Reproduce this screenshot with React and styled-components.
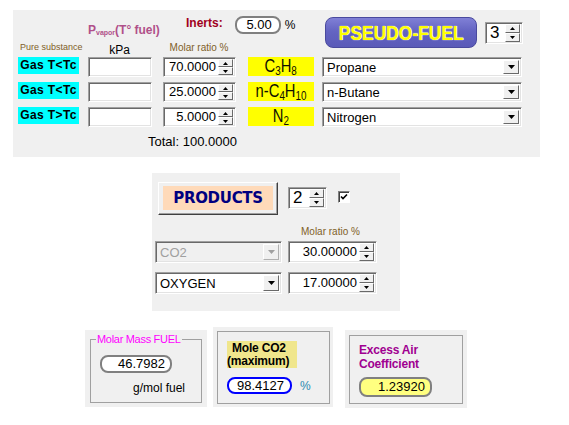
import React from 'react';
import styled, { createGlobalStyle } from 'styled-components';

const GlobalStyle = createGlobalStyle`
  * { box-sizing: border-box; }
  body {
    margin: 0;
    background: #fff;
    font-family: "Liberation Sans", Arial, sans-serif;
    color: #000;
  }
`;

const COLS = '70px 75px 85px 74px 218px';

const Page = styled.div`
  width: 569px;
  height: 425px;
  display: flex;
  flex-direction: column;
  align-items: flex-start;
  overflow: hidden;
`;

/* ---------- win controls ---------- */

const Sunken = styled.div`
  display: flex;
  align-items: center;
  width: ${p => p.$w}px;
  height: ${p => p.$h || 20}px;
  background: ${p => (p.$disabled ? '#f0f0f0' : '#fff')};
  border: 1px solid;
  border-color: #a0a0a0 #fff #fff #a0a0a0;
  box-shadow: inset 1px 1px #696969, inset -1px -1px #e3e3e3;
  padding: 2px;
`;

const Raised = styled.div`
  display: flex;
  align-items: center;
  justify-content: center;
  background: #f0f0f0;
  border: 1px solid;
  border-color: #fff #696969 #696969 #fff;
`;

const SpinValue = styled.div`
  flex: 1;
  font-size: ${p => p.$fs || 13}px;
  line-height: 16px;
  text-align: ${p => p.$align || 'right'};
  padding: 0 2px;
  white-space: nowrap;
`;

const SpinButtons = styled.div`
  display: flex;
  flex-direction: column;
  width: 15px;
  height: ${p => p.$h}px;
`;

const SpinBtn = styled(Raised)`
  flex: 1;
`;

const Tri = ({ down, w = 5, h = 3, color = '#000' }) => (
  <svg width={w} height={h} viewBox={`0 0 ${w} ${h}`}>
    <path d={down ? `M0 0H${w}L${w / 2} ${h}z` : `M${w / 2} 0L${w} ${h}H0z`} fill={color} />
  </svg>
);

const Spin = ({ w, h = 20, value, fs, align }) => (
  <Sunken $w={w} $h={h}>
    <SpinValue $fs={fs} $align={align}>{value}</SpinValue>
    <SpinButtons $h={h - 4}>
      <SpinBtn><Tri /></SpinBtn>
      <SpinBtn><Tri down /></SpinBtn>
    </SpinButtons>
  </Sunken>
);

const SelectText = styled.div`
  flex: 1;
  font-size: 13px;
  padding-left: 2px;
  color: ${p => (p.$disabled ? '#a0a0a0' : '#000')};
`;

const ArrowBtn = styled(Raised)`
  width: 16px;
  height: 100%;
  border-color: ${p => (p.$disabled ? '#fff #b0b0b0 #b0b0b0 #fff' : '#fff #696969 #696969 #fff')};
`;

const Select = ({ w, h = 20, value, disabled }) => (
  <Sunken $w={w} $h={h} $disabled={disabled}>
    <SelectText $disabled={disabled}>{value}</SelectText>
    <ArrowBtn $disabled={disabled}>
      <Tri down w={7} h={4} color={disabled ? '#a0a0a0' : '#000'} />
    </ArrowBtn>
  </Sunken>
);

const Pill = styled.div`
  width: ${p => p.$w}px;
  height: ${p => p.$h}px;
  border: 2px solid ${p => p.$border || '#808080'};
  border-radius: 8px;
  background: ${p => p.$bg || '#fff'};
  font-size: 13px;
  line-height: ${p => p.$h - 4}px;
  text-align: right;
  padding-right: ${p => p.$pr || 6}px;
`;

/* ---------- top panel ---------- */

const TopPanel = styled.section`
  margin: 10px 0 0 13px;
  width: 527px;
  height: 147px;
  background: #f0f0f0;
  padding-left: 5px;
  display: flex;
  flex-direction: column;
`;

const Header = styled.div`
  display: grid;
  grid-template-columns: ${COLS};
  grid-template-rows: 32px 15px;
`;

const Pvapor = styled.div`
  grid-column: 2;
  grid-row: 1;
  margin-top: 12px;
  font-size: 12px;
  font-weight: bold;
  line-height: 16px;
  color: #b0508a;
  white-space: nowrap;
  sub { font-size: 7px; vertical-align: -1px; }
`;

const InertsGroup = styled.div`
  grid-column: 3 / 5;
  grid-row: 1;
  margin: 6px 0 0 23px;
  display: flex;
  align-items: center;
  align-self: start;
`;

const InertsLabel = styled.span`
  font-size: 12px;
  font-weight: bold;
  color: #a00020;
  margin-right: 12px;
  margin-top: -4px;
`;

const Percent = styled.span`
  font-size: 12px;
  margin-left: ${p => p.$ml || 4}px;
  color: ${p => p.$color || '#000'};
`;

const RightGroup = styled.div`
  grid-column: 5;
  grid-row: 1 / 3;
  margin: 7px 0 0 3px;
  display: flex;
  align-items: flex-start;
`;

const PseudoButton = styled.button`
  width: 152px;
  height: 31px;
  border: 1px solid #4a4a9e;
  border-radius: 8px;
  background: linear-gradient(#8080d6, #6464c2 45%, #5a5ab8);
  display: flex;
  align-items: center;
  justify-content: center;
  padding: 0;
  cursor: pointer;
`;

const Narrow = styled.span`
  display: inline-block;
  transform: scaleX(${p => p.$sx || 0.85});
  white-space: nowrap;
`;

const PseudoText = styled(Narrow)`
  font-family: "Liberation Sans", Arial, sans-serif;
  font-size: 21px;
  font-weight: bold;
  color: #ffff00;
  text-shadow: 0 0 1px #fffff0, 0 0 1px #fffff0;
`;

const SpinSlot = styled.div`
  margin: ${p => p.$mt || 0}px 0 0 ${p => p.$ml || 0}px;
`;

const SmallLabel = styled.div`
  font-size: ${p => p.$fs || 10}px;
  line-height: 11px;
  color: #806028;
  white-space: nowrap;
`;

const PureLabel = styled(SmallLabel)`
  grid-column: 1;
  grid-row: 2;
  margin-left: 2px;
`;

const KpaLabel = styled.div`
  grid-column: 2;
  grid-row: 2;
  width: 63px;
  text-align: center;
  font-size: 12px;
  line-height: 13px;
  margin-top: 2px;
`;

const MolarLabel = styled(SmallLabel)`
  grid-column: 3;
  grid-row: 2;
  width: 72px;
  text-align: center;
`;

const Body = styled.div`
  display: grid;
  grid-template-columns: ${COLS};
  grid-auto-rows: 20px;
  row-gap: 5px;
  align-items: start;
`;

const GasLabel = styled.div`
  width: 61px;
  height: 17px;
  background: #00ffff;
  font-size: 12px;
  font-weight: bold;
  letter-spacing: 0.4px;
  line-height: 17px;
  text-align: center;
  white-space: nowrap;
`;

const Formula = styled.div`
  width: 66px;
  height: 19px;
  background: #ffff00;
  display: flex;
  justify-content: center;
  font-size: 18px;
  line-height: 19px;
  color: #101000;
  sub { font-size: 12px; vertical-align: -3px; line-height: 0; }
`;

const Total = styled.div`
  margin: 7px 0 0 130px;
  font-size: 13px;
`;

/* ---------- products panel ---------- */

const ProductsPanel = styled.section`
  margin: 16px 0 0 152px;
  width: 248px;
  height: 138px;
  background: #f0f0f0;
  padding: 9px 0 0 3px;
  display: flex;
  flex-direction: column;
  align-items: flex-start;
`;

const ProductsTop = styled.div`
  display: flex;
  align-items: flex-start;
  margin-left: 3px;
`;

const ProductsButton = styled.button`
  width: 120px;
  height: 33px;
  padding: 3px 4px 4px 4px;
  background: #f0f0f0;
  border: 1px solid;
  border-color: #fff #404040 #404040 #fff;
  box-shadow: inset -1px -1px #a0a0a0;
  display: flex;
  cursor: pointer;
`;

const ProductsFace = styled.span`
  flex: 1;
  background: #ffdab9;
  display: flex;
  align-items: center;
  justify-content: center;
  font-family: "DejaVu Sans", Verdana, sans-serif;
  font-size: 15px;
  font-weight: bold;
  letter-spacing: -0.3px;
  color: #000080;
`;

const CheckBox = styled.div`
  width: 12px;
  height: 12px;
  margin: 9px 0 0 11px;
  background: #fff;
  border: 1px solid;
  border-color: #808080 #fff #fff #808080;
  box-shadow: inset 1px 1px #404040;
  display: flex;
  align-items: center;
  justify-content: center;
`;

const ProductsMolar = styled(SmallLabel)`
  margin: 11px 0 0 146px;
`;

const ProductRow = styled.div`
  display: flex;
  gap: 6px;
  margin-top: ${p => p.$mt}px;
`;

/* ---------- result boxes ---------- */

const ResultRow = styled.div`
  display: flex;
  align-items: flex-start;
  margin: 16px 0 0 85px;
`;

const OuterBox = styled.div`
  width: ${p => p.$w}px;
  height: ${p => p.$h}px;
  margin: ${p => p.$mt || 0}px 0 0 ${p => p.$ml || 0}px;
  background: #f0f0f0;
  padding: ${p => p.$pad};
`;

const Group = styled.fieldset`
  margin: 0;
  width: 112px;
  height: 69px;
  border: 1px solid #a0a0a0;
  padding: 0;
  legend {
    margin-left: 5px;
    padding: 0 1px;
    font-size: 11px;
    line-height: 11px;
    letter-spacing: -0.3px;
    color: #ff00ff;
  }
`;

const GroupBody = styled.div`
  padding-left: 9px;
`;

const Frame = styled.div`
  height: 100%;
  border: 1px solid #a0a0a0;
  padding: ${p => p.$pad};
`;

const Unit = styled.div`
  margin: 8px 0 0 33px;
  font-size: 12px;
`;

const KhakiLabel = styled.div`
  width: 70px;
  height: 27px;
  background: #f0e68c;
  font-size: 12px;
  font-weight: bold;
  letter-spacing: -0.2px;
  line-height: 13px;
  padding-top: 1px;
  white-space: nowrap;
  span { display: block; }
  span:first-child { padding-left: 5px; }
`;

const PillRow = styled.div`
  display: flex;
  align-items: center;
  margin-top: ${p => p.$mt}px;
`;

const PurpleLabel = styled.div`
  font-size: 12px;
  font-weight: bold;
  letter-spacing: -0.2px;
  line-height: 14px;
  color: #a00090;
`;

const substances = [
  { gas: 'Gas T<Tc', ratio: '70.0000', f: <>C<sub>3</sub>H<sub>8</sub></>, name: 'Propane' },
  { gas: 'Gas T<Tc', ratio: '25.0000', f: <>n-C<sub>4</sub>H<sub>10</sub></>, name: 'n-Butane' },
  { gas: 'Gas T>Tc', ratio: '5.0000', f: <>N<sub>2</sub></>, name: 'Nitrogen' },
];

export default function App() {
  return (
    <Page>
      <GlobalStyle />
      <TopPanel>
        <Header>
          <Pvapor>P<sub>vapor</sub>(T° fuel)</Pvapor>
          <InertsGroup>
            <InertsLabel>Inerts:</InertsLabel>
            <Pill $w={46} $h={18} $pr={7}>5.00</Pill>
            <Percent>%</Percent>
          </InertsGroup>
          <RightGroup>
            <PseudoButton>
              <PseudoText $sx={0.83}>PSEUDO-FUEL</PseudoText>
            </PseudoButton>
            <SpinSlot $ml={8} $mt={5}>
              <Spin w={38} h={22} value="3" fs={17} align="left" />
            </SpinSlot>
          </RightGroup>
          <PureLabel $fs={9}>Pure substance</PureLabel>
          <KpaLabel>kPa</KpaLabel>
          <MolarLabel>Molar ratio %</MolarLabel>
        </Header>
        <Body>
          {substances.map((s, i) => (
            <React.Fragment key={i}>
              <GasLabel>{s.gas}</GasLabel>
              <Sunken $w={64} $h={20} />
              <Spin w={73} h={20} value={s.ratio} />
              <Formula><Narrow $sx={0.82}>{s.f}</Narrow></Formula>
              <Select w={200} h={20} value={s.name} />
            </React.Fragment>
          ))}
        </Body>
        <Total>Total: 100.0000</Total>
      </TopPanel>

      <ProductsPanel>
        <ProductsTop>
          <ProductsButton>
            <ProductsFace>PRODUCTS</ProductsFace>
          </ProductsButton>
          <SpinSlot $ml={10} $mt={5}>
            <Spin w={39} h={22} value="2" fs={17} align="left" />
          </SpinSlot>
          <CheckBox>
            <svg width="8" height="8" viewBox="0 0 8 8">
              <path d="M1 3.5L3 5.5L7 1.5" stroke="#000" strokeWidth="1.6" fill="none" />
            </svg>
          </CheckBox>
        </ProductsTop>
        <ProductsMolar>Molar ratio %</ProductsMolar>
        <ProductRow $mt={4}>
          <Select w={127} h={22} value="CO2" disabled />
          <Spin w={89} h={22} value="30.00000" />
        </ProductRow>
        <ProductRow $mt={9}>
          <Select w={127} h={22} value="OXYGEN" />
          <Spin w={89} h={22} value="17.00000" />
        </ProductRow>
      </ProductsPanel>

      <ResultRow>
        <OuterBox $w={122} $h={77} $mt={3} $pad="4px 5px 0">
          <Group>
            <legend>Molar Mass FUEL</legend>
            <GroupBody>
              <PillRow $mt={10}>
                <Pill $w={72} $h={18} $pr={5}>46.7982</Pill>
              </PillRow>
              <Unit>g/mol fuel</Unit>
            </GroupBody>
          </Group>
        </OuterBox>

        <OuterBox $w={120} $h={80} $ml={6} $pad="4px 3px 3px 4px">
          <Frame $pad="9px 0 0 9px">
            <KhakiLabel>
              <span>Mole CO2</span>
              <span>(maximum)</span>
            </KhakiLabel>
            <PillRow $mt={9}>
              <Pill $w={65} $h={17} $border="#0000ff" $pr={6}>98.4127</Pill>
              <Percent $color="#2a8ab0" $ml={8}>%</Percent>
            </PillRow>
          </Frame>
        </OuterBox>

        <OuterBox $w={122} $h={78} $ml={12} $mt={3} $pad="5px 4px 4px 4px">
          <Frame $pad="7px 0 0 9px">
            <PurpleLabel>
              Excess Air<br />Coefficient
            </PurpleLabel>
            <PillRow $mt={6}>
              <Pill $w={73} $h={20} $bg="#ffff80" $pr={5}>1.23920</Pill>
            </PillRow>
          </Frame>
        </OuterBox>
      </ResultRow>
    </Page>
  );
}
